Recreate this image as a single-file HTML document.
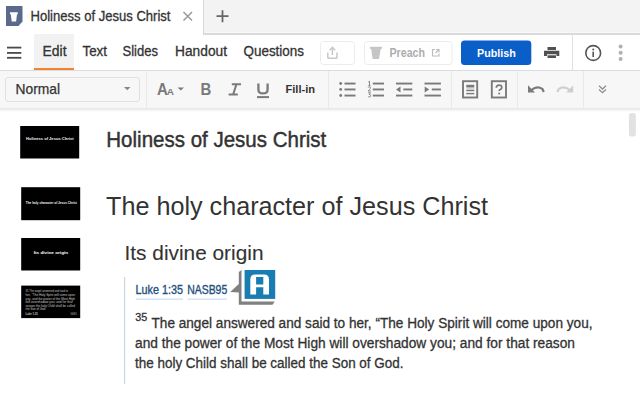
<!DOCTYPE html>
<html><head><meta charset="utf-8">
<style>
html,body{margin:0;padding:0;width:640px;height:418px;overflow:hidden;background:#fff;}
svg{display:block;}
text{font-family:"Liberation Sans",sans-serif;}
</style></head>
<body>
<svg width="640" height="418" viewBox="0 0 640 418">
<!-- tab bar -->
<rect x="0" y="0" width="640" height="34" fill="#fff"/>
<rect x="203" y="0" width="437" height="32" fill="#f3f3f3"/>
<rect x="203" y="32" width="437" height="1" fill="#f8f8f8"/>
<rect x="203" y="33" width="437" height="2" fill="#dadada"/>
<rect x="203" y="0" width="1" height="34" fill="#d6d6d6"/>
<!-- logo -->
<path d="M6 6 H22.5 V21.5 L18.5 26 H6 Z" fill="#5b6a8c"/>
<path d="M10 12.2 H17.8 V14.2 H17 L16.1 21.6 H11.7 L10.8 14.2 H10 Z" fill="#fff"/>
<text x="30.5" y="21" font-size="14" fill="#333" stroke="#333" stroke-width="0.3" textLength="140" lengthAdjust="spacingAndGlyphs">Holiness of Jesus Christ</text>
<path d="M183.5 12 L192 20.5 M192 12 L183.5 20.5" stroke="#999" stroke-width="1.5"/>
<path d="M216.5 16.2 H228.5 M222.5 10.2 V22.2" stroke="#666" stroke-width="1.8"/>

<!-- row 2 -->
<rect x="34" y="34" width="40" height="34" fill="#f2f2f2"/>
<rect x="34" y="68" width="40" height="2" fill="#f5822e"/>
<rect x="7" y="46.7" width="14.3" height="1.8" fill="#4a4a4a"/>
<rect x="7" y="52" width="14.3" height="1.8" fill="#4a4a4a"/>
<rect x="7" y="56.9" width="14.3" height="1.8" fill="#4a4a4a"/>
<g font-size="14" fill="#333" stroke="#333" stroke-width="0.3">
<text x="42.5" y="55.6" textLength="24" lengthAdjust="spacingAndGlyphs">Edit</text>
<text x="82.5" y="55.6" textLength="24.5" lengthAdjust="spacingAndGlyphs">Text</text>
<text x="122.5" y="55.6" textLength="35.5" lengthAdjust="spacingAndGlyphs">Slides</text>
<text x="175" y="55.6" textLength="52" lengthAdjust="spacingAndGlyphs">Handout</text>
<text x="243.5" y="55.6" textLength="60.5" lengthAdjust="spacingAndGlyphs">Questions</text>
</g>
<!-- upload btn -->
<rect x="320.5" y="41.5" width="34" height="23" rx="3" fill="#fff" stroke="#ececec" stroke-width="1"/>
<path d="M327.8 52.5 V57.2 Q327.8 58.3 328.9 58.3 H335.9 Q337 58.3 337 57.2 V52.5" fill="none" stroke="#c8c8c8" stroke-width="1.5"/>
<path d="M332.4 55 V47.5 M329.5 50.2 L332.4 47.3 L335.3 50.2" fill="none" stroke="#c8c8c8" stroke-width="1.5"/>
<!-- preach btn -->
<rect x="364.5" y="41.5" width="87.5" height="23" rx="3" fill="#fff" stroke="#ececec" stroke-width="1"/>
<path d="M369.8 46.8 H381.9 V48.8 H380.8 L379 58.9 H372.7 L371.1 48.8 H369.8 Z" fill="#c6c6c6"/>
<text x="389.5" y="56.9" font-size="12.1" font-weight="700" fill="#adadad" textLength="35.5" lengthAdjust="spacingAndGlyphs">Preach</text>
<path d="M435 49.5 H432.5 V56 H439 V53.5 M436 49.5 H439 V52.5 M439 49.5 L435.5 53" fill="none" stroke="#bbb" stroke-width="1.1"/>
<!-- publish -->
<rect x="461" y="40.6" width="70.3" height="24.4" rx="3.5" fill="#0a5ec8"/>
<text x="477" y="57" font-size="11.2" font-weight="700" fill="#fff" textLength="38.8" lengthAdjust="spacingAndGlyphs">Publish</text>
<!-- printer -->
<path d="M547.5 47 H556 V50 H547.5 Z" fill="#505050"/>
<path d="M544 50.8 H559.3 V56 H556.5 V54.2 H547 V56 H544 Z" fill="#505050"/>
<path d="M547.5 55.3 H556 V58 H547.5 Z" fill="#505050"/>
<rect x="572" y="34" width="1" height="36" fill="#e0e0e0"/>
<circle cx="593.2" cy="53" r="7.4" fill="none" stroke="#555" stroke-width="1.6"/>
<circle cx="593.2" cy="49.6" r="1" fill="#555"/>
<rect x="592.4" y="51.7" width="1.6" height="5.3" fill="#555"/>
<circle cx="620.6" cy="46.6" r="2" fill="#b0b0b0"/>
<circle cx="620.6" cy="52.8" r="2" fill="#b0b0b0"/>
<circle cx="620.6" cy="59.1" r="2" fill="#b0b0b0"/>

<!-- toolbar -->
<rect x="0" y="70" width="640" height="38.5" fill="#f7f7f7"/>
<rect x="0" y="70" width="640" height="1" fill="#dcdcdc"/>
<defs><linearGradient id="sh" x1="0" y1="0" x2="0" y2="1"><stop offset="0" stop-color="#e4e4e4"/><stop offset="1" stop-color="#ffffff"/></linearGradient></defs>
<rect x="0" y="108" width="640" height="4" fill="url(#sh)"/>
<rect x="5.5" y="77.5" width="134" height="24" rx="2.5" fill="#f7f7f7" stroke="#e0e0e0" stroke-width="1"/>
<text x="15.5" y="94.4" font-size="14.2" fill="#333" stroke="#333" stroke-width="0.25" textLength="44.5" lengthAdjust="spacingAndGlyphs">Normal</text>
<path d="M124 87 H130.5 L127.25 90.3 Z" fill="#888"/>
<rect x="146" y="71" width="1" height="37" fill="#e9e9e9"/>
<!-- AA -->
<text x="157" y="95.4" font-size="16.5" font-weight="700" fill="#7a7a7a" textLength="10.8" lengthAdjust="spacingAndGlyphs">A</text>
<text x="166.8" y="95.4" font-size="9" font-weight="700" fill="#7a7a7a" textLength="7.2" lengthAdjust="spacingAndGlyphs">A</text>
<path d="M177.6 87.4 H184 L180.8 90.6 Z" fill="#7a7a7a"/>
<text x="200.5" y="95.4" font-size="16.5" font-weight="700" fill="#7a7a7a" textLength="10.8" lengthAdjust="spacingAndGlyphs">B</text>
<!-- italic I -->
<path d="M231.8 84.2 H241 M228.6 94.4 H237.8 M236.4 84.2 L233.2 94.4" fill="none" stroke="#7a7a7a" stroke-width="2"/>
<!-- U -->
<path d="M258.4 83.5 V89.4 Q258.4 93.4 263 93.4 Q267.6 93.4 267.6 89.4 V83.5" fill="none" stroke="#7a7a7a" stroke-width="2.3"/>
<rect x="257" y="96.1" width="12" height="2" fill="#7a7a7a"/>
<text x="285.5" y="93.4" font-size="11.7" font-weight="700" fill="#333" textLength="29.6" lengthAdjust="spacingAndGlyphs">Fill-in</text>
<rect x="328" y="71" width="1" height="37" fill="#e9e9e9"/>
<!-- bullet list -->
<g fill="#7a7a7a">
<circle cx="340.7" cy="83.5" r="1.4"/><circle cx="340.7" cy="89.4" r="1.4"/><circle cx="340.7" cy="95.5" r="1.4"/>
<rect x="344.5" y="82.6" width="11" height="1.9"/><rect x="344.5" y="88.5" width="11" height="1.9"/><rect x="344.5" y="94.6" width="11" height="1.9"/>
<!-- numbered -->
<rect x="372.8" y="82.6" width="11.2" height="1.9"/><rect x="372.8" y="88.5" width="11.2" height="1.9"/><rect x="372.8" y="94.6" width="11.2" height="1.9"/>
<path d="M368.3 82 L369.5 81.3 V85.6 M368.3 85.6 H370.6 M368.2 87.6 Q368.5 86.8 369.4 86.8 Q370.5 86.8 370.5 87.9 Q370.5 88.6 369.6 89.5 L368.2 91 H370.8 M368.2 92.8 H370.5 L369.2 94.4 Q370.7 94.4 370.7 95.7 Q370.7 97 369.3 97 Q368.5 97 368.1 96.5" fill="none" stroke="#7a7a7a" stroke-width="0.9"/>
<!-- outdent -->
<rect x="396" y="82.6" width="16.3" height="1.9"/><rect x="403.3" y="88.5" width="9" height="1.9"/><rect x="396" y="94.6" width="16.3" height="1.9"/>
<path d="M396 89.45 L400.5 86.5 V92.4 Z"/>
<!-- indent -->
<rect x="424.5" y="82.6" width="16.4" height="1.9"/><rect x="431.8" y="88.5" width="9.1" height="1.9"/><rect x="424.5" y="94.6" width="16.4" height="1.9"/>
<path d="M429.2 89.45 L424.7 86.5 V92.4 Z"/>
</g>
<rect x="451" y="71" width="1" height="37" fill="#e9e9e9"/>
<!-- box icons -->
<rect x="463" y="81.2" width="14.2" height="16.3" fill="none" stroke="#7a7a7a" stroke-width="1.9"/>
<rect x="466.3" y="87.4" width="8" height="2.5" fill="#d6d6d6"/>
<rect x="466.3" y="84.8" width="8" height="2.6" fill="#7a7a7a"/>
<rect x="466.3" y="89.9" width="8" height="1.3" fill="#7a7a7a"/>
<rect x="466.3" y="92.9" width="8" height="1.4" fill="#7a7a7a"/>
<rect x="491.8" y="81.2" width="14.2" height="16.3" fill="none" stroke="#7a7a7a" stroke-width="1.9"/>
<path d="M496.3 87.8 Q496.3 85.1 499 85.1 Q501.8 85.1 501.8 87.4 Q501.8 88.9 500.2 89.6 Q499.2 90.1 499.2 91.1" fill="none" stroke="#7a7a7a" stroke-width="1.7"/><rect x="498.3" y="92.6" width="1.8" height="1.8" fill="#7a7a7a"/>
<rect x="517" y="71" width="1" height="37" fill="#e9e9e9"/>
<!-- undo/redo -->
<path d="M531.5 90 Q537 85.3 542.3 88.8 L543.8 92" fill="none" stroke="#7a7a7a" stroke-width="2.2"/>
<path d="M528 85.3 L528 92.5 L535 92.5 Z" fill="#7a7a7a"/>
<path d="M569.7 90 Q564.2 85.3 558.9 88.8 L557.4 92" fill="none" stroke="#cfcfcf" stroke-width="2.2"/>
<path d="M573.2 85.3 L573.2 92.5 L566.2 92.5 Z" fill="#cfcfcf"/>
<rect x="583" y="71" width="1" height="37" fill="#e9e9e9"/>
<path d="M599 85.8 L602.5 89 L606 85.8 M599 89.5 L602.5 92.7 L606 89.5" fill="none" stroke="#8e8e8e" stroke-width="1.3"/>

<!-- scrollbar -->
<rect x="628.9" y="113.1" width="7" height="23.5" rx="2.8" fill="#e2e2e2"/>

<!-- thumbnails -->
<rect x="20.2" y="126" width="59" height="32.5" fill="#000"/>
<text x="49.8" y="139.5" font-size="4" font-weight="700" fill="#f2f2f2" text-anchor="middle" textLength="47.5" lengthAdjust="spacingAndGlyphs">Holiness of Jesus Christ</text>
<rect x="21.2" y="187.2" width="59" height="33" fill="#000"/>
<text x="51.3" y="204.4" font-size="3.5" font-weight="700" fill="#f4f4f4" text-anchor="middle" textLength="51" lengthAdjust="spacingAndGlyphs">The holy character of Jesus Christ</text>
<rect x="21.2" y="238" width="59" height="32.5" fill="#000"/>
<text x="50.9" y="253.8" font-size="4.4" font-weight="700" fill="#fff" text-anchor="middle" textLength="34.5" lengthAdjust="spacingAndGlyphs">Its divine origin</text>
<rect x="21.2" y="285.6" width="59" height="32.5" fill="#000"/>
<g font-size="2.9" fill="#c8c8c8">
<text x="25.6" y="292.4" textLength="42.4" lengthAdjust="spacingAndGlyphs">35 The angel answered and said to</text>
<text x="25.6" y="296.1" textLength="49.4" lengthAdjust="spacingAndGlyphs">her, “The Holy Spirit will come upon</text>
<text x="25.6" y="299.8" textLength="49.4" lengthAdjust="spacingAndGlyphs">you, and the power of the Most High</text>
<text x="25.6" y="303.4" textLength="47" lengthAdjust="spacingAndGlyphs">will overshadow you; and for that</text>
<text x="25.6" y="306.9" textLength="49.4" lengthAdjust="spacingAndGlyphs">reason the holy Child shall be called</text>
<text x="25.6" y="310.4" textLength="20.4" lengthAdjust="spacingAndGlyphs">the Son of God.</text>
<text x="25.6" y="314.6" textLength="12" lengthAdjust="spacingAndGlyphs" font-weight="700">Luke 1:35</text>
<text x="70.6" y="314.6" textLength="6.3" lengthAdjust="spacingAndGlyphs" fill="#aaa">NASB95</text>
</g>

<!-- headings -->
<text x="106.3" y="147.3" font-size="21.7" fill="#333" stroke="#333" stroke-width="0.45" textLength="220" lengthAdjust="spacingAndGlyphs">Holiness of Jesus Christ</text>
<text x="106" y="215" font-size="25.5" fill="#333" textLength="382" lengthAdjust="spacingAndGlyphs">The holy character of Jesus Christ</text>
<text x="124.5" y="260" font-size="21" fill="#333" stroke="#333" stroke-width="0.1" textLength="139" lengthAdjust="spacingAndGlyphs">Its divine origin</text>

<!-- scripture -->
<rect x="124" y="277" width="1.2" height="107" fill="#ccd6e0"/>
<text x="135.5" y="293.8" font-size="12.2" fill="#24507e" stroke="#24507e" stroke-width="0.35" textLength="47.5" lengthAdjust="spacingAndGlyphs">Luke 1:35</text>
<text x="187.2" y="293.8" font-size="12.2" fill="#24507e" stroke="#24507e" stroke-width="0.35" textLength="40" lengthAdjust="spacingAndGlyphs">NASB95</text>
<rect x="136" y="298.6" width="47" height="1" fill="#bfd6ee"/>
<rect x="187.5" y="298.6" width="39.5" height="1" fill="#bfd6ee"/>
<!-- logos A icon -->
<path d="M238.8 272 L241.5 270 V301.6 H274.7 L272.5 304.7 H238.8 V292.4 L230.2 292 L238.8 284 Z" fill="#808080"/>
<rect x="244.6" y="270" width="30.6" height="28.9" fill="#1a7db2"/>
<path d="M250.3 294.6 V279.5 Q250.3 274.5 255.3 274.5 H264 Q269 274.5 269 279.5 V294.6 H263.3 V287.3 H256.1 V294.6 Z M256.1 277 V284.6 H263.3 V277 Z" fill="#fff" fill-rule="evenodd"/>

<g fill="#333" stroke="#333" stroke-width="0.3">
<text x="135.3" y="321.3" font-size="10.5" textLength="12" lengthAdjust="spacingAndGlyphs">35</text>
<text x="151.5" y="327.5" font-size="14" textLength="441" lengthAdjust="spacingAndGlyphs">The angel answered and said to her, “The Holy Spirit will come upon you,</text>
<text x="135" y="347.5" font-size="14" textLength="440" lengthAdjust="spacingAndGlyphs">and the power of the Most High will overshadow you; and for that reason</text>
<text x="135" y="367.5" font-size="14" textLength="268.5" lengthAdjust="spacingAndGlyphs">the holy Child shall be called the Son of God.</text>
</g>
</svg>
</body></html>
